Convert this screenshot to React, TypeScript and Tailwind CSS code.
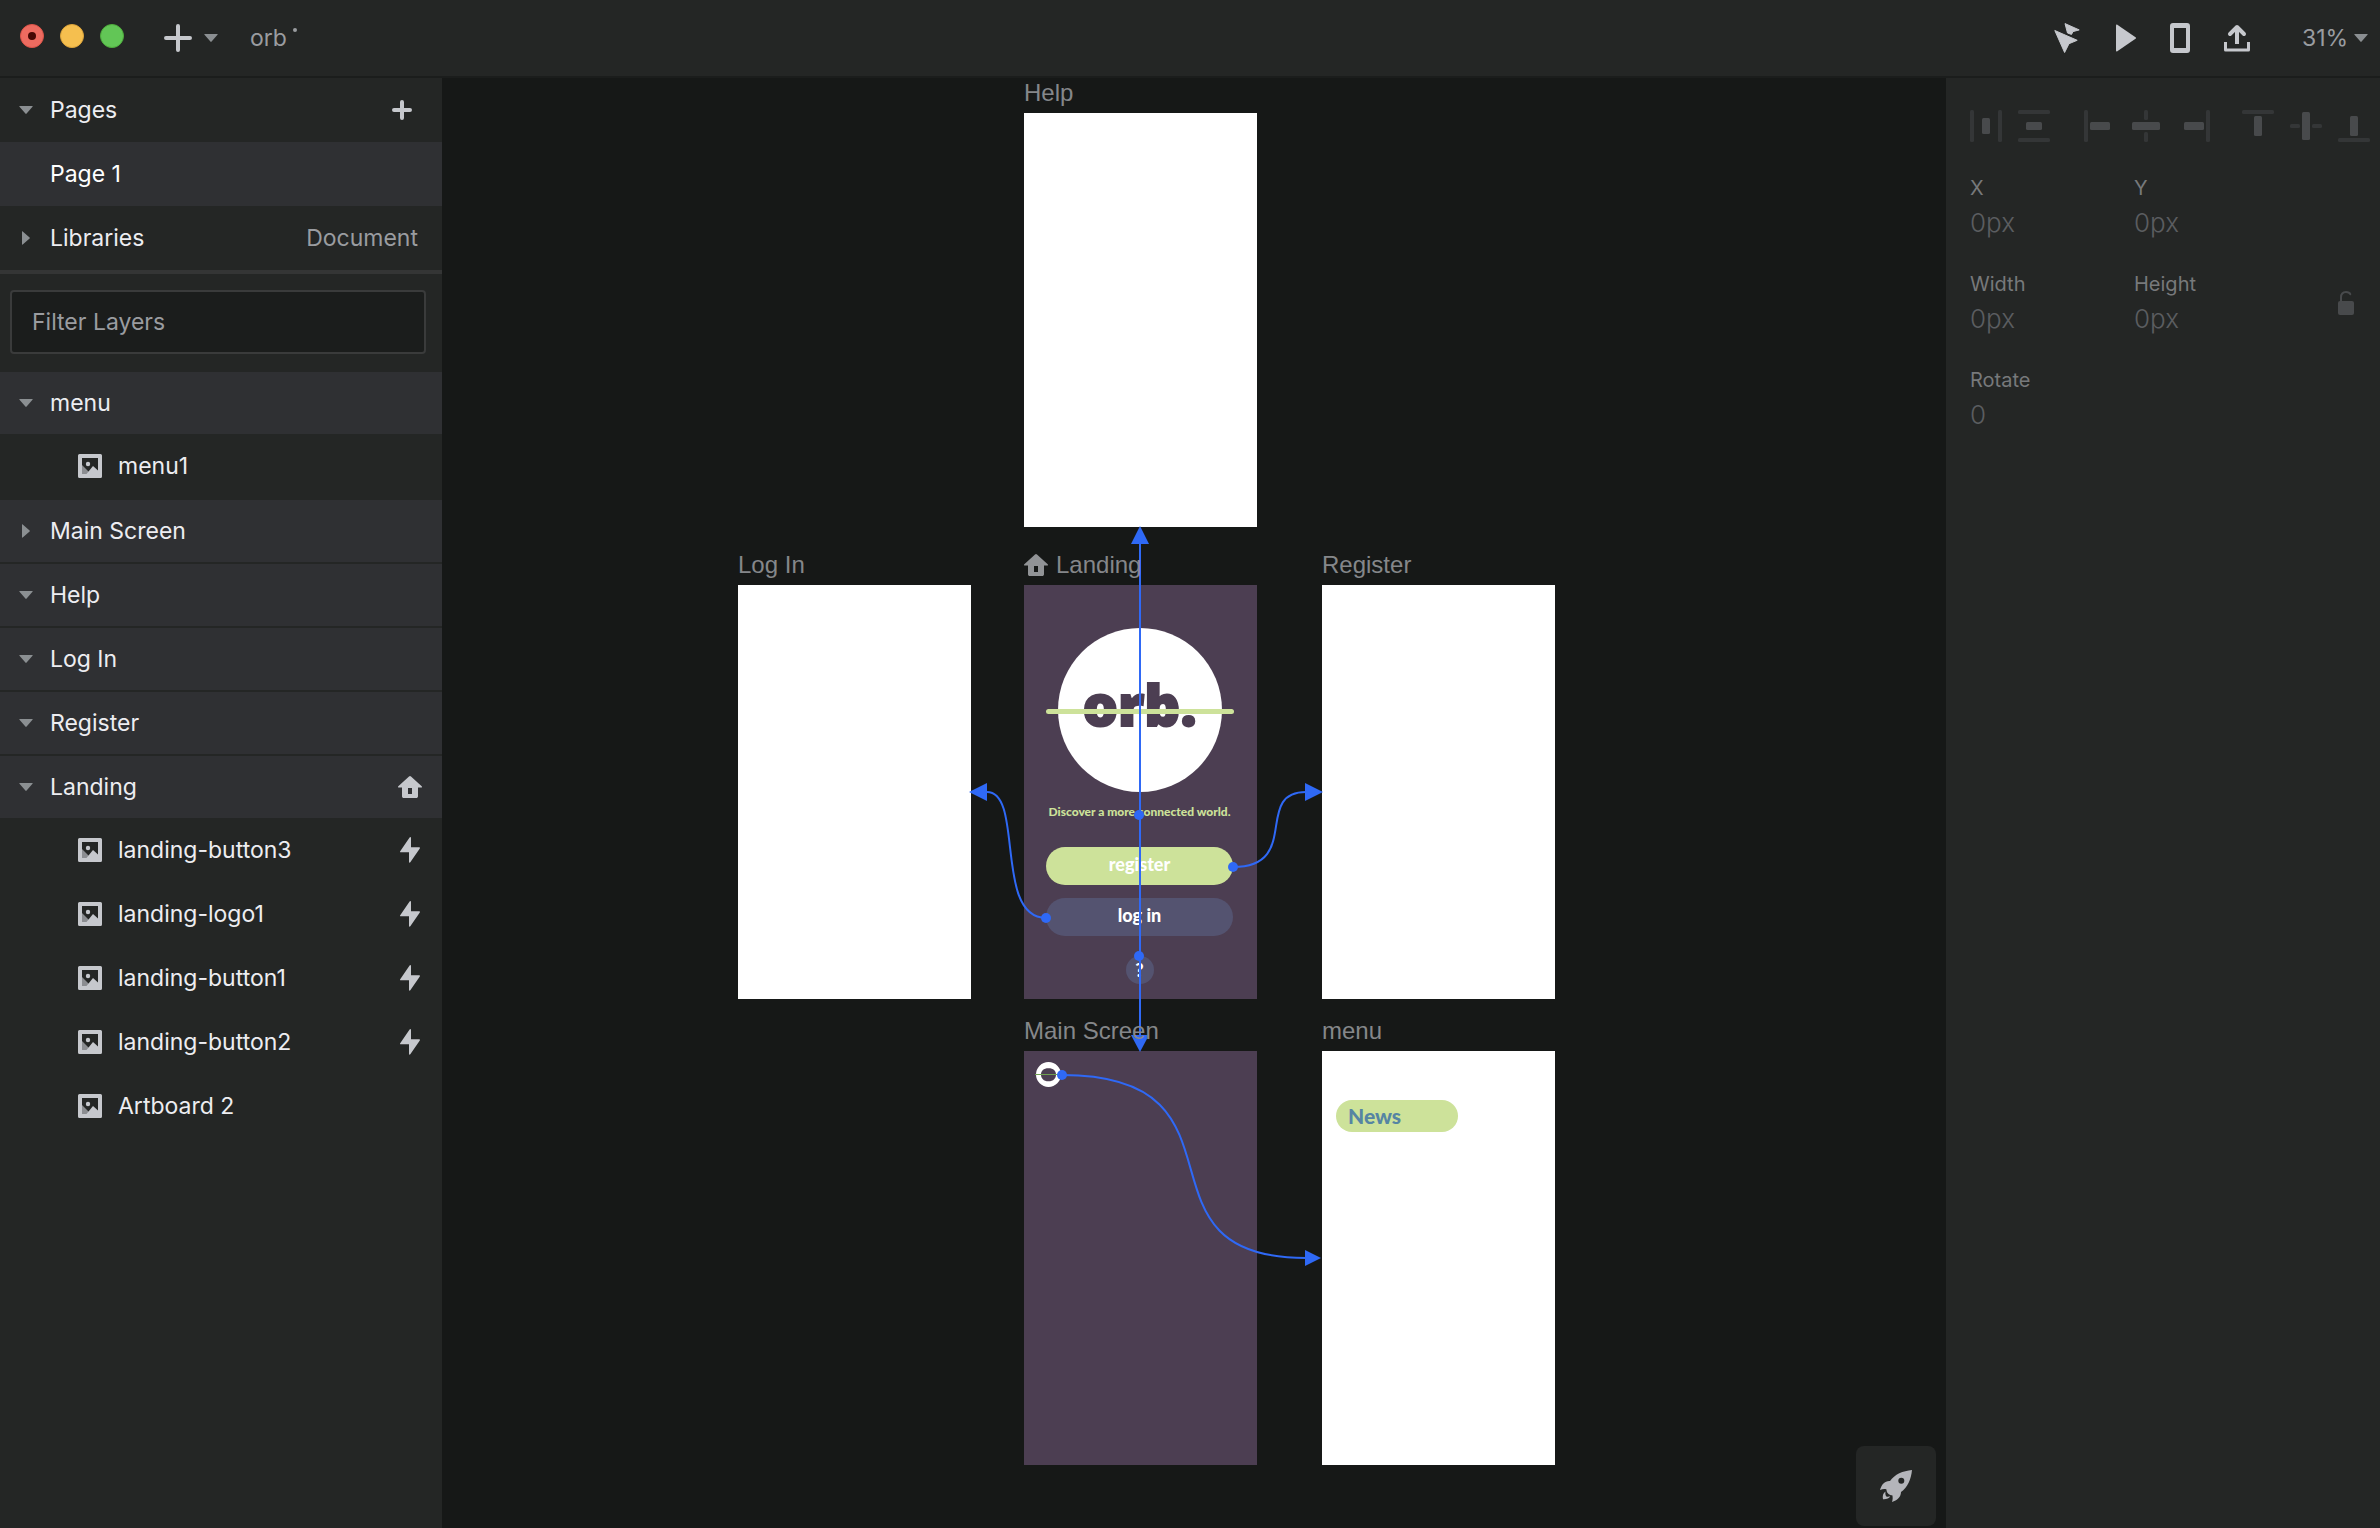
import { useState, type ReactNode } from "react";

type Layer = { name: string; linked?: boolean };
type Group = { name: string; open: boolean; home?: boolean; layers: Layer[] };

const groups: Group[] = [
  { name: "menu", open: true, layers: [{ name: "menu1" }] },
  { name: "Main Screen", open: false, layers: [] },
  { name: "Help", open: true, layers: [] },
  { name: "Log In", open: true, layers: [] },
  { name: "Register", open: true, layers: [] },
  {
    name: "Landing",
    open: true,
    home: true,
    layers: [
      { name: "landing-button3", linked: true },
      { name: "landing-logo1", linked: true },
      { name: "landing-button1", linked: true },
      { name: "landing-button2", linked: true },
      { name: "Artboard 2" },
    ],
  },
];

function Caret({ open = true }: { open?: boolean }) {
  return (
    <svg width="14" height="14" viewBox="0 0 14 14" className="shrink-0 fill-[#8b8f92]" aria-hidden="true">
      {open ? <path d="M.8 3h12.4c.5 0 .6.4.3.7L7.6 10.6a.8.8 0 0 1-1.2 0L.5 3.7C.2 3.4.3 3 .8 3z" /> : <path d="M3 .8v12.4c0 .5.4.6.7.3l6.9-5.9a.8.8 0 0 0 0-1.2L3.7.5C3.4.2 3 .3 3 .8z" />}
    </svg>
  );
}

function Plus({ size }: { size: number }) {
  const c = size / 2;
  return (
    <svg width={size} height={size} aria-hidden="true" stroke="#c6c8cd" strokeWidth="4" strokeLinecap="round">
      <path d={`M${c} 2V${size - 2}M2 ${c}H${size - 2}`} />
    </svg>
  );
}

function HomeIcon({ color }: { color: string }) {
  return (
    <svg width="24" height="22" viewBox="0 0 24 22" aria-hidden="true" className="shrink-0">
      <path
        fill={color}
        fillRule="evenodd"
        d="M11 .5a1.5 1.5 0 0 1 2 0l10.7 9.8c.5.5.3 1.2-.4 1.2H20v8.700c0 1-.8 1.800-1.800 1.800H5.800C4.800 22 4 21.200 4 20.200V11.500H.7c-.7 0-.9-.7-.4-1.200zM10 12v6h4v-6z"
      />
    </svg>
  );
}

function ImageIcon() {
  return (
    <svg width="24" height="24" viewBox="0 0 24 24" aria-hidden="true" className="shrink-0">
      <path d="M4 11l9 9H4z" fill="#8b8d91" />
      <path fill="#c6c8cd" fillRule="evenodd" d="M1.500 0h21A1.500 1.500 0 0 1 24 1.500v21a1.500 1.500 0 0 1-1.500 1.500h-21A1.500 1.500 0 0 1 0 22.500v-21A1.500 1.500 0 0 1 1.500 0zM4 4v16h4.500l6.500-8 5 4.500V4z" />
      <circle cx="10" cy="10" r="2.200" fill="#c6c8cd" />
    </svg>
  );
}

function BoltIcon() {
  return (
    <svg width="20" height="26" viewBox="0 0 20 26" aria-hidden="true" className="mr-0.5 shrink-0">
      <path fill="#c6c8cd" d="M9.600.6C10.200-.3 11 0 11 .9V10.300h8.200c.8 0 1 .5.6 1.100L10.300 25.200c-.5.800-1.300.5-1.300-.3V15.300H.8c-.8 0-1-.5-.6-1.100z" />
    </svg>
  );
}

function CursorIcon() {
  return (
    <svg width="26" height="30" viewBox="0 0 26 30" aria-hidden="true">
      <g fill="#c6c8cd" strokeLinejoin="round" stroke="#c6c8cd" strokeWidth="1">
        <path d="M.8 7.500l22.400 9.800-8.200 3.400-4.400 8.800z" />
        <path d="M11 .6l14.200 6.300-6.200 1.700-1.500 2.800-4-1.400z" />
      </g>
    </svg>
  );
}

function UploadIcon() {
  return (
    <svg width="26" height="28" viewBox="0 0 26 28" aria-hidden="true" fill="none" stroke="#c6c8cd" strokeWidth="4" strokeLinecap="butt">
      <path d="M13 3v17" />
      <path d="M6 10l7-7 7 7" strokeLinecap="round" strokeLinejoin="round" />
      <path d="M1.500 18v8h23v-8" strokeWidth="3" strokeLinejoin="round" />
    </svg>
  );
}

function RocketIcon() {
  return (
    <svg width="32" height="32" viewBox="0 0 32 32" aria-hidden="true" fill="#b4b5ba">
      <path fillRule="evenodd" d="M32 0C23 .8 14.500 4.500 10 11c-5-.4-8.500 3.500-10 9 2.500-1 4.800-1.200 6.500-.6 0 3.200 2.300 5.500 5.800 5.900.6 2 .5 4.300-.3 6.700 5.200-1.500 9-5 9-10C27.500 17.500 31.300 9 32 0zM21.300 7.700a3 3 0 1 1 0 6 3 3 0 0 1 0-6z" />
      <path d="M5.500 21.500C3 23 2.300 26 3 29.300c3.300.2 6-.6 7.200-3-1.500.6-2.800.6-3.900.2-.9-1.300-1.100-3-.8-5z" />
    </svg>
  );
}

/* Bars are [x, y, width, height] inside a 32px box. */
type Bar = [number, number, number, number];
const alignments: { label: string; guides: Bar[]; item: Bar }[][] = [
  [
    { label: "Distribute horizontally", guides: [[0, 0, 4, 32], [28, 0, 4, 32]], item: [12, 8, 8, 16] },
    { label: "Distribute vertically", guides: [[0, 0, 32, 4], [0, 28, 32, 4]], item: [8, 12, 16, 8] },
  ],
  [
    { label: "Align left", guides: [[2, 0, 4, 32]], item: [8, 12, 20, 8] },
    { label: "Align center", guides: [[14, 0, 4, 10], [14, 22, 4, 10]], item: [2, 12, 28, 8] },
    { label: "Align right", guides: [[28, 0, 4, 32]], item: [6, 12, 20, 8] },
  ],
  [
    { label: "Align top", guides: [[0, 0, 32, 4]], item: [12, 6, 8, 20] },
    { label: "Align middle", guides: [[0, 14, 10, 4], [22, 14, 10, 4]], item: [12, 2, 8, 28] },
    { label: "Align bottom", guides: [[0, 28, 32, 4]], item: [12, 6, 8, 20] },
  ],
];

function Header() {
  return (
    <header className="flex h-[78px] shrink-0 items-center justify-between border-b-2 border-[#1b1d1c] pr-3 pl-5">
      <div className="flex items-center">
        <div className="flex gap-4 pb-1">
          <button aria-label="Close" className="flex size-6 items-center justify-center rounded-full border border-[#dd5449] bg-[#ed6b60]">
            <span className="size-2 rounded-full bg-[#460804]" />
          </button>
          <button aria-label="Minimize" className="size-6 rounded-full border border-[#dda43a] bg-[#f5bf4f]" />
          <button aria-label="Zoom" className="size-6 rounded-full border border-[#4ead3c] bg-[#62c656]" />
        </div>
        <button aria-label="Insert" className="ml-10 flex items-center gap-3">
          <Plus size={28} />
          <Caret />
        </button>
        <h1 className="ml-8 flex text-[23px] leading-7 text-[#9a9ca0]">
          orb
          <span className="mt-1 ml-1.5 size-1 rounded-full bg-[#9a9ca0]" />
        </h1>
      </div>
      <div className="flex items-center">
        <button aria-label="Interactions"><CursorIcon /></button>
        <button aria-label="Preview" className="ml-9">
          <svg width="20" height="28" viewBox="0 0 20 28" aria-hidden="true"><path fill="#c6c8cd" d="M0 1.500C0 .6.7.4 1.300.8L19.500 13.200a1 1 0 0 1 0 1.600L1.300 27.200C.7 27.600 0 27.400 0 26.500z" /></svg>
        </button>
        <button aria-label="Device" className="ml-[34px] h-[30px] w-5 rounded-[3px] border-x-4 border-y-[5px] border-[#c6c8cd]" />
        <button aria-label="Share" className="ml-[34px]"><UploadIcon /></button>
        <label className="ml-[52px] flex items-center">
          <select aria-label="Zoom level" defaultValue="31%" className="w-[52px] appearance-none bg-transparent p-0 text-[23px] leading-7 text-[#9a9ca0]">
            <option>31%</option>
            <option>50%</option>
            <option>75%</option>
          </select>
          <Caret />
        </label>
      </div>
    </header>
  );
}

function Sidebar() {
  const [filter, setFilter] = useState("");
  return (
    <aside className="w-[442px] shrink-0">
      <div className="flex h-16 items-center justify-between pr-[30px] pl-[19px]">
        <button className="flex items-center gap-[17px]"><Caret />Pages</button>
        <button aria-label="Add page"><Plus size={20} /></button>
      </div>
      <button className="flex h-16 w-full items-center bg-[#2f3033] pl-[50px] text-white">Page 1</button>
      <div className="flex h-[68px] items-center justify-between border-b-4 border-[#343535] pr-6 pl-[19px]">
        <button className="flex items-center gap-[17px]"><Caret open={false} />Libraries</button>
        <button className="text-[#9a9ca0]">Document</button>
      </div>
      <div className="py-4 pr-4 pl-2.5">
        <input
          aria-label="Filter Layers"
          placeholder="Filter Layers"
          value={filter}
          onChange={(e) => setFilter(e.target.value)}
          className="h-16 w-full rounded-sm border-2 border-[#3a3b3b] bg-[#1b1d1c] px-5 placeholder:text-[#9a9ca0]"
        />
      </div>
      {groups.map((group) => (
        <section key={group.name}>
          <button className="flex h-16 w-full items-center gap-[17px] border-t-2 border-[#242625] bg-[#2f3033] pr-5 pl-[19px]">
            <Caret open={group.open} />
            <span className="flex-1 text-left">{group.name}</span>
            {group.home && <HomeIcon color="#c6c8cd" />}
          </button>
          {group.layers.map((layer) => (
            <button key={layer.name} className="flex h-16 w-full items-center gap-4 pr-5 pl-[78px]">
              <ImageIcon />
              <span className="flex-1 text-left">{layer.name}</span>
              {layer.linked && <BoltIcon />}
            </button>
          ))}
        </section>
      ))}
    </aside>
  );
}

function Artboard({ title, place, fill = "bg-white", home = false, children }: { title: string; place: string; fill?: string; home?: boolean; children?: ReactNode }) {
  return (
    <figure className={`absolute ${place}`}>
      <figcaption className="relative z-20 mb-2 flex h-6 items-center gap-2 font-['Liberation_Sans',sans-serif] text-2xl leading-6 text-[#85878a]">
        {home && <HomeIcon color="#919396" />}
        {title}
      </figcaption>
      <div className={`relative h-[414px] w-[233px] ${fill}`}>{children}</div>
    </figure>
  );
}

function Connectors() {
  return (
    <svg className="pointer-events-none absolute inset-0 z-10 size-full" aria-hidden="true">
      <g fill="none" stroke="#2f69f6" strokeWidth="2">
        <path d="M698 460V960" />
        <path d="M791 789C860 789 811 714 864 714" />
        <path d="M604 840C552 840 582 714 545 714" />
        <path d="M620 997C820 997 680 1180 864 1180" />
      </g>
      <g fill="#2f69f6">
        <path d="M698 448l9 18h-18z" />
        <path d="M698 974l9-17h-18z" />
        <path d="M881 714l-18-9v18z" />
        <path d="M527 714l18-9v18z" />
        <path d="M879 1180l-16-8v16z" />
        <circle cx="697" cy="737" r="5" />
        <circle cx="697" cy="878" r="5" />
        <circle cx="791" cy="789" r="5" />
        <circle cx="604" cy="840" r="5" />
        <circle cx="620" cy="997" r="5" />
      </g>
    </svg>
  );
}

function Canvas() {
  return (
    <main className="relative min-h-[1450px] flex-1 overflow-hidden bg-[#161817]">
      <Artboard title="Help" place="left-[582px] top-[3px]" />
      <Artboard title="Log In" place="left-[296px] top-[475px]" />
      <Artboard title="Landing" place="left-[582px] top-[475px]" fill="bg-[#4c3e52]" home>
        <div className="flex flex-col items-center pt-[43px] pr-0.5 font-['Lato',sans-serif] font-black text-white">
          <div className="relative flex size-[164px] items-center justify-center rounded-full bg-white">
            <span className="pb-3 font-['Open_Sans',sans-serif] text-[56px] leading-[64px] font-extrabold text-[#4c3e52] [-webkit-text-stroke:2px_#4c3e52]">orb.</span>
            <span className="absolute top-[81px] -left-3 h-[5px] w-[188px] rounded-full bg-[#cde29a]" />
          </div>
          <p className="mt-3 text-xs leading-4 whitespace-nowrap text-[#cde29a]">Discover a more connected world.</p>
          <button className="mt-[27px] h-[38px] w-[187px] rounded-full bg-[#cde29a] pb-1 text-lg leading-7">register</button>
          <button className="mt-[13px] h-[38px] w-[187px] rounded-full bg-[#545370] pb-1 text-lg leading-7">log in</button>
          <button className="mt-5 size-7 rounded-full bg-[#545370] text-lg leading-7">?</button>
        </div>
      </Artboard>
      <Artboard title="Register" place="left-[880px] top-[475px]" />
      <Artboard title="Main Screen" place="left-[582px] top-[941px]" fill="bg-[#4c3e52]">
        <svg width="30" height="26" viewBox="0 0 30 26" aria-hidden="true" className="absolute top-[11px] left-[11px]">
          <path fill="#fff" fillRule="evenodd" d="M13.500 0a12.500 12.500 0 1 1 0 25 12.500 12.500 0 0 1 0-25zM13.500 6.200c-5 0-7.500 2.500-7.500 6.300s2.500 6.800 7.500 6.800 7.500-3 7.500-6.800-2.500-6.300-7.500-6.300z" />
          <path stroke="#6f9f52" d="M0 12.500h27" />
        </svg>
      </Artboard>
      <Artboard title="menu" place="left-[880px] top-[941px]">
        <div className="px-3.5 pt-[49px]">
          <button className="flex h-8 w-[122px] items-center rounded-full bg-[#cde29a] px-3 font-['Lato',sans-serif] text-[21px] font-black text-[#5685a3]">News</button>
        </div>
      </Artboard>
      <Connectors />
      <button aria-label="Launch" className="absolute right-2.5 bottom-0.5 flex size-20 items-center justify-center rounded-lg bg-[#242625]">
        <RocketIcon />
      </button>
    </main>
  );
}

function Field({ label, value }: { label: string; value: string }) {
  return (
    <label className="flex w-[164px] flex-col gap-0.5 text-xl leading-7 text-[#77797b]">
      {label}
      <input readOnly value={value} className="h-9 w-full bg-transparent text-[26px] font-light text-[#5b5d60]" />
    </label>
  );
}

function Inspector() {
  return (
    <aside className="w-[434px] shrink-0 pt-8 pl-6">
      <div className="flex gap-8">
        {alignments.map((set, i) => (
          <div key={i} className="flex gap-4">
            {set.map(({ label, guides, item }) => (
              <button key={label} aria-label={label} className="size-8">
                <svg width="32" height="32" aria-hidden="true">
                  {guides.map(([x, y, w, h]) => (
                    <rect key={`${x}-${y}`} x={x} y={y} width={w} height={h} rx="1.500" fill="#343637" />
                  ))}
                  <rect x={item[0]} y={item[1]} width={item[2]} height={item[3]} rx="1.500" fill="#484a4c" />
                </svg>
              </button>
            ))}
          </div>
        ))}
      </div>
      <div className="mt-8 flex flex-col gap-[30px]">
        <div className="flex">
          <Field label="X" value="0px" />
          <Field label="Y" value="0px" />
        </div>
        <div className="flex items-center">
          <Field label="Width" value="0px" />
          <Field label="Height" value="0px" />
          <button aria-label="Lock proportions" className="ml-10">
            <svg width="16" height="24" viewBox="0 0 16 24" aria-hidden="true">
              <path d="M3 11V6.500C3 2.500 5 1 8 1c2.300 0 3.700.7 4.300 2.200" fill="none" stroke="#484a4c" strokeWidth="2" strokeLinecap="round" />
              <rect y="10" width="16" height="14" rx="2" fill="#484a4c" />
            </svg>
          </button>
        </div>
        <Field label="Rotate" value="0" />
      </div>
    </aside>
  );
}

export default function App() {
  return (
    <div className="flex min-h-screen flex-col bg-[#242625] font-['Inter',sans-serif] text-[23px] leading-7 text-[#ededf1]">
      <Header />
      <div className="flex flex-1">
        <Sidebar />
        <Canvas />
        <Inspector />
      </div>
    </div>
  );
}
